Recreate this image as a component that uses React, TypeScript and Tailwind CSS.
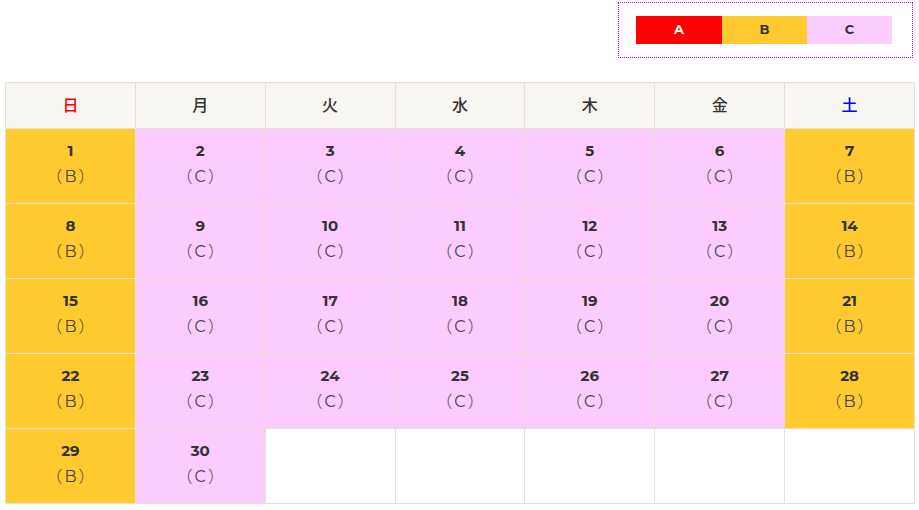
const weekdays = [
  { label: "日", color: "text-[#ff0000]" },
  { label: "月", color: "text-[#333333]" },
  { label: "火", color: "text-[#333333]" },
  { label: "水", color: "text-[#333333]" },
  { label: "木", color: "text-[#333333]" },
  { label: "金", color: "text-[#333333]" },
  { label: "土", color: "text-[#0000ff]" },
];

type Day = { date: number; type: "B" | "C" } | null;

const days: Day[] = Array.from({ length: 35 }, (_, i) => {
  const date = i + 1;
  if (date > 30) return null;
  const dow = i % 7;
  return { date, type: dow === 0 || dow === 6 ? "B" : "C" };
});

const weeks: Day[][] = [0, 1, 2, 3, 4].map((w) => days.slice(w * 7, w * 7 + 7));

export default function App() {
  return (
    <div className="w-[919px] h-[510px] bg-white px-[5px] pt-[2px] font-['Montserrat','Lato','Noto_Sans','Noto_Sans_CJK_JP',sans-serif] text-[#333333]">
      {/* Legend */}
      <div className="flex justify-end pr-[1px]">
        <div className="w-[295px] h-[56px] border border-dotted border-[#cc00cc] flex items-center pl-[17px]">
          <div className="flex h-[28px] text-[13px] font-bold">
            <div className="w-[86px] bg-[#ff0000] text-white flex items-center justify-center">A</div>
            <div className="w-[85px] bg-[#ffca30] flex items-center justify-center">B</div>
            <div className="w-[85px] bg-[#fccbff] flex items-center justify-center">C</div>
          </div>
        </div>
      </div>

      {/* Calendar */}
      <table className="mt-[24px] w-[910px] border-collapse table-fixed">
        <thead>
          <tr className="h-[46px] bg-[#f7f6f2]">
            {weekdays.map((d) => (
              <th
                key={d.label}
                className={`border border-[#e8dfd4] text-[16px] font-medium leading-[20px] pb-[4px] font-['Noto_Sans_CJK_JP',sans-serif] ${d.color}`}
              >
                {d.label}
              </th>
            ))}
          </tr>
        </thead>
        <tbody>
          {weeks.map((week, wi) => (
            <tr key={wi} className="h-[75px]">
              {week.map((day, di) => (
                <td
                  key={di}
                  className={`border border-[#e8dfd4] text-center align-top pt-[12px] ${
                    day === null ? "bg-white" : day.type === "B" ? "bg-[#ffca30]" : "bg-[#fccbff]"
                  }`}
                >
                  {day && (
                    <>
                      <div className="text-[15px] font-bold leading-[20px]">{day.date}</div>
                      <div className="text-[16px] leading-[22px] mt-[3px] font-normal text-[#444]">
                        <span className="font-['Noto_Sans_CJK_JP',sans-serif] font-light">（</span>
                        <span className="px-[2px]">{day.type}</span>
                        <span className="font-['Noto_Sans_CJK_JP',sans-serif] font-light">）</span>
                      </div>
                    </>
                  )}
                </td>
              ))}
            </tr>
          ))}
        </tbody>
      </table>
    </div>
  );
}
